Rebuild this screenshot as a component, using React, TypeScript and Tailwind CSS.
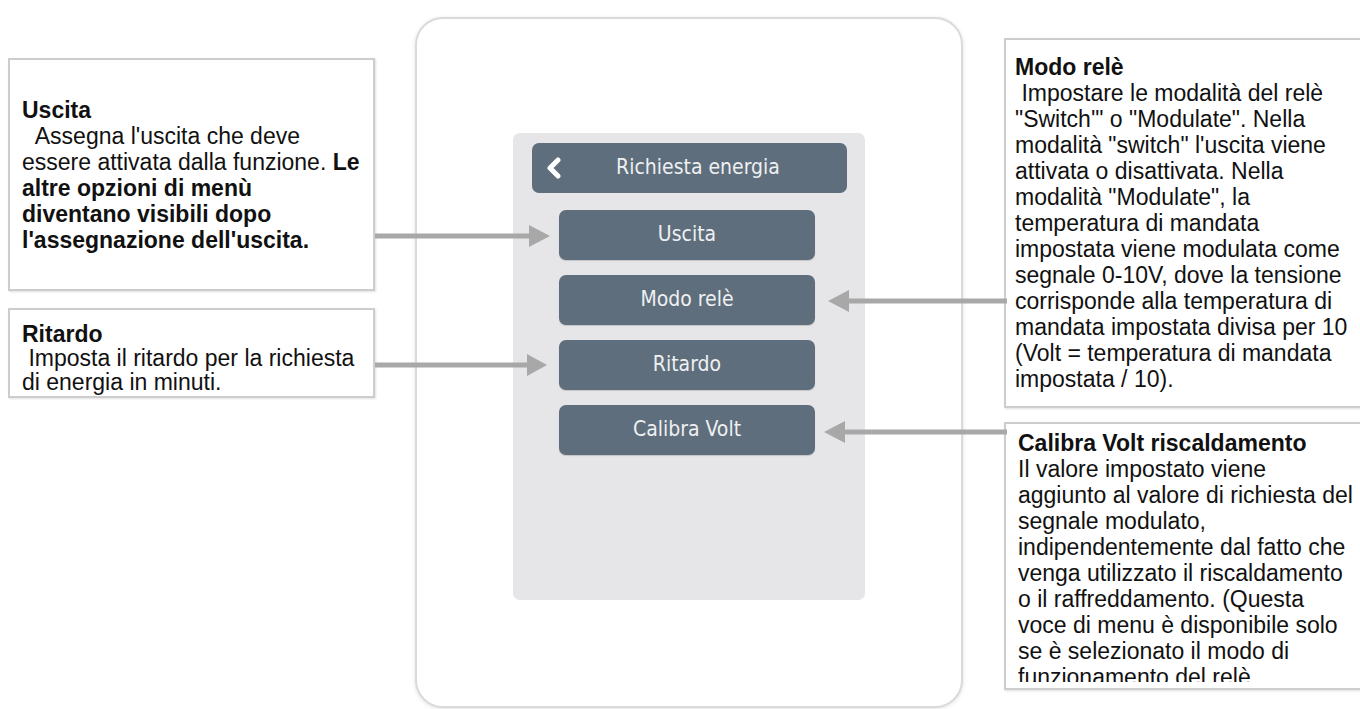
import React from 'react';

const docFont = { fontFamily: '"Liberation Sans", Arial, sans-serif' };
const uiFont = { fontFamily: '"DejaVu Sans Condensed", "Liberation Sans Narrow", "Liberation Sans", sans-serif' };

const MENU = ['Uscita', 'Modo relè', 'Ritardo', 'Calibra Volt'];

function NoteBox({ className, children }: { className?: string; children: React.ReactNode }) {
  return (
    <div
      style={docFont}
      className={`border-2 border-[#cdcdcd] bg-white text-[23px] leading-[26px] text-[#111] shadow-[1px_1px_2px_rgba(0,0,0,0.12)] ${className ?? ''}`}
    >
      {children}
    </div>
  );
}

function Arrows() {
  const c = '#a8a8a8';
  return (
    <svg className="pointer-events-none absolute left-0 top-0" width="1360" height="709">
      <line x1="375" y1="236" x2="532" y2="236" stroke={c} strokeWidth="5" />
      <polygon points="529,225 550,236 529,247" fill={c} />
      <line x1="1007" y1="301" x2="846" y2="301" stroke={c} strokeWidth="5" />
      <polygon points="849,290 828,301 849,312" fill={c} />
      <line x1="375" y1="365" x2="530" y2="365" stroke={c} strokeWidth="5" />
      <polygon points="527,354 547,365 527,376" fill={c} />
      <line x1="1007" y1="432" x2="842" y2="432" stroke={c} strokeWidth="5" />
      <polygon points="845,421 824,432 845,443" fill={c} />
    </svg>
  );
}

export default function App() {
  return (
    <div className="relative flex h-[709px] w-[1360px] overflow-hidden bg-white">
      {/* left notes */}
      <div className="flex w-[375px] shrink-0 flex-col pl-[8px] pt-[58px]">
        <NoteBox className="flex h-[233px] w-[367px] flex-col justify-center px-[12px]">
          <div>
            <b>Uscita</b>
            <br />
            &nbsp;&nbsp;Assegna l'uscita che deve
            <br />
            essere attivata dalla funzione. <b>Le</b>
            <br />
            <b>altre opzioni di menù</b>
            <br />
            <b>diventano visibili dopo</b>
            <br />
            <b>l'assegnazione dell'uscita.</b>
          </div>
        </NoteBox>
        <NoteBox className="mt-[17px] h-[90px] w-[367px] px-[12px] pt-[12px]">
          <div className="leading-[24px]">
            <b>Ritardo</b>
            <br />
            &nbsp;Imposta il ritardo per la richiesta
            <br />
            di energia in minuti.
          </div>
        </NoteBox>
      </div>

      {/* device */}
      <div className="ml-[40px] mt-[17px] h-[691px] w-[548px] shrink-0 rounded-[28px] border-2 border-[#dadada] bg-white shadow-[0_1px_4px_rgba(0,0,0,0.12)]">
        <div
          style={uiFont}
          className="ml-[96px] mt-[114px] flex h-[467px] w-[352px] flex-col items-center rounded-[7px] bg-[#e6e6e8] pt-[10px]"
        >
          <div className="relative flex h-[50px] w-[315px] items-center justify-center rounded-[7px] bg-[#5f6e7c] pl-[18px] text-[21px] text-[#eef0f2]">
            <svg className="absolute left-[14px] top-[14px]" width="16" height="22" viewBox="0 0 16 22">
              <polyline points="12,3 4,11 12,19" fill="none" stroke="#fff" strokeWidth="5" strokeLinecap="round" strokeLinejoin="round" />
            </svg>
            Richiesta energia
          </div>
          <div className="mr-[4px] mt-[17px] flex flex-col gap-[15px]">
            {MENU.map((m) => (
              <div
                key={m}
                className="flex h-[50px] w-[256px] items-center justify-center rounded-[7px] bg-[#5f6e7c] text-[21px] text-[#eef0f2] shadow-[0_1px_1px_rgba(0,0,0,0.15)]"
              >
                {m}
              </div>
            ))}
          </div>
        </div>
      </div>

      {/* right notes */}
      <div className="ml-[41px] flex w-[380px] shrink-0 flex-col pt-[38px]">
        <NoteBox className="h-[370px] px-[9px] pt-[14px]">
          <b>Modo relè</b>
          <br />
          &nbsp;Impostare le modalità del relè
          <br />
          "Switch'" o "Modulate". Nella
          <br />
          modalità "switch" l'uscita viene
          <br />
          attivata o disattivata. Nella
          <br />
          modalità "Modulate", la
          <br />
          temperatura di mandata
          <br />
          impostata viene modulata come
          <br />
          segnale 0-10V, dove la tensione
          <br />
          corrisponde alla temperatura di
          <br />
          mandata impostata divisa per 10
          <br />
          (Volt = temperatura di mandata
          <br />
          impostata / 10).
        </NoteBox>
        <NoteBox className="mt-[14px] h-[268px] px-[12px] pt-[6px] pb-[6px]">
          <div className="h-[252px] overflow-hidden">
            <b>Calibra Volt riscaldamento</b>
            <br />
            Il valore impostato viene
            <br />
            aggiunto al valore di richiesta del
            <br />
            segnale modulato,
            <br />
            indipendentemente dal fatto che
            <br />
            venga utilizzato il riscaldamento
            <br />
            o il raffreddamento. (Questa
            <br />
            voce di menu è disponibile solo
            <br />
            se è selezionato il modo di
            <br />
            funzionamento del relè.
          </div>
        </NoteBox>
      </div>

      <Arrows />
    </div>
  );
}
